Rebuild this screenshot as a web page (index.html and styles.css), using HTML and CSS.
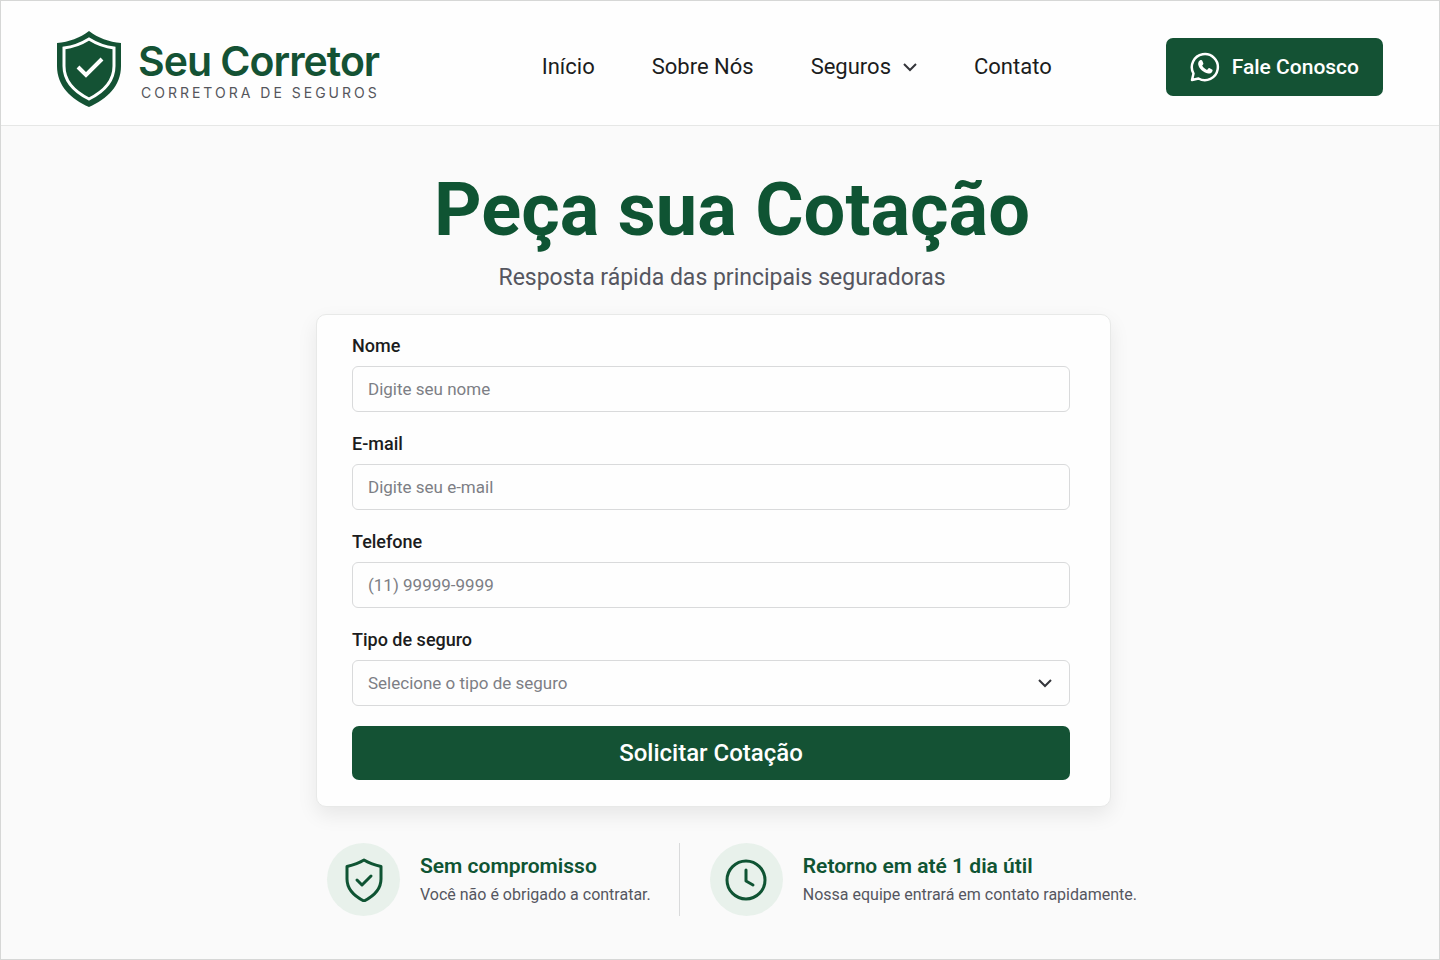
FILE: index.html
```html
<!DOCTYPE html>
<html lang="pt-BR">
  <head>
    <meta charset="UTF-8">
    <meta name="viewport" content="width=device-width, initial-scale=1.0">
    <title>Seu Corretor - Peça sua Cotação</title>
    <link rel="stylesheet" href="styles.css">
  </head>
  <body>
    <header class="header">
      <a href="#" class="logo">
        <svg class="logo-icon" viewBox="0 0 64 76" aria-hidden="true">
          <path fill="#145234" d="M32 0C41 7 52 11 64 12V35C64 55 50 68 32 76C14 68 0 55 0 35V12C12 11 23 7 32 0Z"/>
          <path fill="none" stroke="#fff" stroke-width="3" d="M32 8C40 13 48 16 57 17V35C57 51 46 61 32 68C18 61 7 51 7 35V17C16 16 24 13 32 8Z"/>
          <path fill="none" stroke="#fff" stroke-width="4" d="M21 36L29 44L45 28"/>
        </svg>
        <span class="logo-text">
          <span class="logo-name">Seu Corretor</span>
          <span class="logo-tagline">CORRETORA DE SEGUROS</span>
        </span>
      </a>
      <nav class="nav">
        <a href="#">Início</a>
        <a href="#">Sobre Nós</a>
        <a href="#">Seguros
          <svg class="nav-arrow" viewBox="0 0 14 14" aria-hidden="true"><path d="M1 4L7 10L13 4"/></svg>
        </a>
        <a href="#">Contato</a>
      </nav>
      <button type="button" class="btn btn-contact">
        <svg class="whatsapp" viewBox="0 0 30 30" aria-hidden="true">
          <path fill="none" stroke="#fff" stroke-width="2.500" stroke-linejoin="round" d="M2 28L3.500 21.500A13 13 0 1 1 8.500 26.500Z"/>
          <path fill="#fff" d="M10.500 8C11.300 7.700 12 8 12.300 8.700L13.300 11.200C13.500 11.800 13.300 12.200 12.200 13.500C13.200 15.500 14.800 17 17 17.900L18.400 16.400C18.800 16 19.200 16 19.700 16.200L22 17.400C22.600 17.700 22.700 18.100 22.500 18.900C22 20.800 20 21.700 18.200 21.400C13 20.500 9.300 17 8.200 12.500C7.900 10.700 8.800 8.700 10.500 8Z"/>
        </svg>
        Fale Conosco
      </button>
    </header>

    <main class="quote">
      <h1 class="title">Peça sua Cotação</h1>
      <p class="subtitle">Resposta rápida das principais seguradoras</p>

      <form class="card">
        <div class="field">
          <label for="nome">Nome</label>
          <input type="text" id="nome" placeholder="Digite seu nome">
        </div>
        <div class="field">
          <label for="email">E-mail</label>
          <input type="email" id="email" placeholder="Digite seu e-mail">
        </div>
        <div class="field">
          <label for="telefone">Telefone</label>
          <input type="tel" id="telefone" placeholder="(11) 99999-9999">
        </div>
        <div class="field">
          <label for="tipo">Tipo de seguro</label>
          <div class="select-wrap">
            <select id="tipo">
              <option value="">Selecione o tipo de seguro</option>
              <option value="auto">Auto</option>
              <option value="vida">Vida</option>
              <option value="residencial">Residencial</option>
            </select>
            <svg class="select-arrow" viewBox="0 0 14 14" aria-hidden="true"><path d="M1 4L7 10L13 4"/></svg>
          </div>
        </div>
        <button type="submit" class="btn btn-submit">Solicitar Cotação</button>
      </form>

      <section class="features">
        <div class="feature">
          <div class="feature-icon">
            <svg viewBox="0 0 44 44" aria-hidden="true">
              <path d="M22 2C27 5 33 7 39 8.500V21C39 31 32 38 22 43C12 38 5 31 5 21V8.500C11 7 17 5 22 2Z"/>
              <path d="M15 22L20 27L29 18"/>
            </svg>
          </div>
          <div>
            <h2>Sem compromisso</h2>
            <p>Você não é obrigado a contratar.</p>
          </div>
        </div>
        <div class="feature">
          <div class="feature-icon">
            <svg viewBox="0 0 44 44" aria-hidden="true">
              <circle cx="22" cy="22" r="19"/>
              <path d="M22 12V23L29 27"/>
            </svg>
          </div>
          <div>
            <h2>Retorno em até 1 dia útil</h2>
            <p>Nossa equipe entrará em contato rapidamente.</p>
          </div>
        </div>
      </section>
    </main>
  </body>
</html>
```
FILE: styles.css
```css
* {
  box-sizing: border-box;
}
body {
  margin: 0;
  min-height: 100vh;
  border: 1px solid #d6d7d6;
  font-family: Roboto, Arial, sans-serif;
  color: #1b1c20;
  background-color: #fafafa;
}
a {
  color: inherit;
  text-decoration: none;
}

/* Header */
.header {
  display: flex;
  align-items: center;
  justify-content: space-between;
  padding: 26px 56px 18px;
  background-color: #fefefe;
  border-bottom: 1px solid #e6e7e6;
}
.logo {
  display: flex;
  align-items: center;
  gap: 17px;
  padding-top: 4px;
}
.logo-icon {
  width: 64px;
  height: 76px;
}
.logo-text {
  display: flex;
  flex-direction: column;
}
.logo-name {
  font-family: Inter, Arial, sans-serif;
  font-size: 41px;
  font-weight: 600;
  line-height: 48px;
  letter-spacing: -1px;
  color: #145234;
}
.logo-tagline {
  padding-left: 3px;
  font-family: Inter, Arial, sans-serif;
  font-size: 14px;
  line-height: 16px;
  letter-spacing: 3px;
  color: #55565c;
}
.nav {
  display: flex;
  gap: 57px;
  padding-left: 48px;
  font-size: 22px;
  line-height: 28px;
}
.nav a {
  display: flex;
  align-items: center;
  gap: 12px;
}
.nav-arrow,
.select-arrow {
  width: 14px;
  height: 14px;
  fill: none;
  stroke: #34353a;
  stroke-width: 2;
}
.btn {
  border: none;
  border-radius: 7px;
  background-color: #145234;
  color: #fff;
  font-family: inherit;
  font-weight: 500;
  cursor: pointer;
}
.btn-contact {
  display: flex;
  align-items: center;
  gap: 12px;
  height: 58px;
  padding: 0 24px;
  font-size: 21px;
}
.whatsapp {
  width: 30px;
  height: 30px;
}

/* Quote form */
.quote {
  max-width: 816px;
  margin: 0 auto;
  padding: 40px 0 40px 4px;
}
.title {
  margin: 0;
  padding-left: 20px;
  font-size: 74px;
  font-weight: 700;
  line-height: 88px;
  text-align: center;
  color: #0f5433;
}
.subtitle {
  margin: 9px 0 21px;
  font-size: 23px;
  line-height: 30px;
  text-align: center;
  color: #55565f;
}
.card {
  display: flex;
  flex-direction: column;
  gap: 20px;
  margin-right: 17px;
  padding: 19px 40px 26px 35px;
  background-color: #fefefe;
  border: 1px solid #e8e9e8;
  border-radius: 10px;
  box-shadow: 0 8px 20px rgba(0, 0, 0, 0.08);
}
.field {
  display: flex;
  flex-direction: column;
  gap: 8px;
}
.field label {
  font-size: 18px;
  font-weight: 500;
  line-height: 24px;
}
.field input,
.field select {
  width: 100%;
  height: 46px;
  padding: 0 15px;
  border: 1px solid #d9dadb;
  border-radius: 6px;
  background-color: #fefefe;
  font-family: inherit;
  font-size: 17px;
  color: #7d7e85;
}
.field select {
  appearance: none;
}
.field input::placeholder {
  color: #7d7e85;
}
.select-wrap {
  position: relative;
}
.select-arrow {
  position: absolute;
  top: 16px;
  right: 18px;
  pointer-events: none;
}
.btn-submit {
  height: 54px;
  font-size: 24px;
}

/* Features */
.features {
  display: flex;
  padding: 36px 0 0 11px;
}
.feature {
  display: flex;
  align-items: center;
  gap: 20px;
  white-space: nowrap;
}
.feature:first-child {
  padding-right: 28px;
  margin-right: 30px;
  border-right: 1px solid #d9dadb;
}
.feature-icon {
  display: flex;
  align-items: center;
  justify-content: center;
  flex-shrink: 0;
  width: 73px;
  height: 73px;
  border-radius: 50%;
  background-color: #e8f1eb;
}
.feature-icon svg {
  width: 44px;
  height: 44px;
  fill: none;
  stroke: #0f5433;
  stroke-width: 3;
  stroke-linecap: round;
  stroke-linejoin: round;
}
.feature h2 {
  margin: 0;
  font-size: 21px;
  font-weight: 600;
  line-height: 30px;
  color: #0f5433;
}
.feature p {
  margin: 0;
  font-size: 16px;
  line-height: 28px;
  color: #55565f;
}
```
